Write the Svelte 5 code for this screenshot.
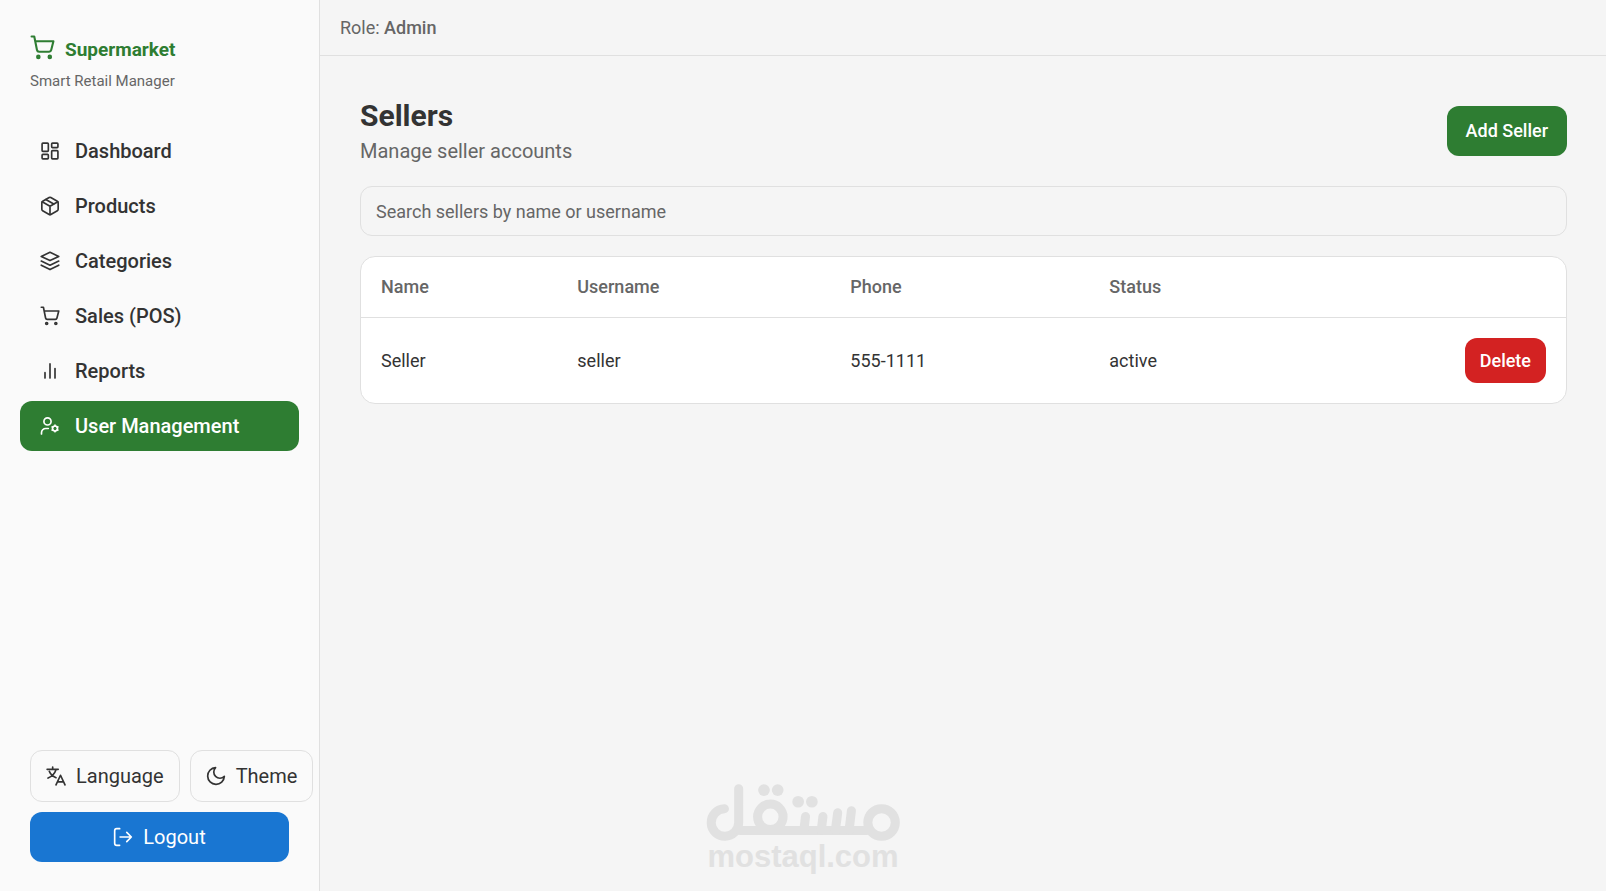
<script>
  let query = $state('');
  let active = $state('User Management');
  let sellers = $state([
    { name: 'Seller', username: 'seller', phone: '555-1111', status: 'active' }
  ]);

  const nav = ['Dashboard', 'Products', 'Categories', 'Sales (POS)', 'Reports', 'User Management'];

  const visible = $derived(
    sellers.filter((s) => (s.name + ' ' + s.username).toLowerCase().includes(query.toLowerCase()))
  );

  function remove(username) {
    sellers = sellers.filter((s) => s.username !== username);
  }
</script>

{#snippet icon(name)}
  <svg class="icon" class:brand-icon={name === 'Brand'} viewBox="0 0 24 24" aria-hidden="true">
    {#if name === 'Dashboard'}
      <rect x="2.5" y="2.5" width="7.5" height="10" rx="1" />
      <rect x="14" y="2.5" width="7.5" height="5.5" rx="1" />
      <rect x="14" y="11.5" width="7.5" height="10" rx="1" />
      <rect x="2.5" y="16" width="7.5" height="5.5" rx="1" />
    {:else if name === 'Products'}
      <path d="m7 4.2 9.5 5.4" />
      <path d="M21.8 8a2 2 0 0 0-1-1.73l-7.8-4.4a2 2 0 0 0-2 0L3.2 6.270A2 2 0 0 0 2.2 8v8a2 2 0 0 0 1 1.73l7.8 4.4a2 2 0 0 0 2 0l7.8-4.4a2 2 0 0 0 1-1.730Z" />
      <path d="m2.6 7 9.4 5.300L21.400 7M12 22.300V12.300" />
    {:else if name === 'Categories'}
      <path d="M12 1.5 22.5 6.5 12 11.5 1.5 6.5Z" />
      <path d="M1.5 12 12 17 22.500 12M1.500 17 12 22.300 22.500 17" />
    {:else if name === 'Sales (POS)' || name === 'Brand'}
      <circle cx="8" cy="21" r="1.2" />
      <circle cx="19" cy="21" r="1.2" />
      <path d="M1.5 1.500h2.6l2.6 12.900a2 2 0 0 0 2 1.6h9.700a2 2 0 0 0 1.950-1.570L22.500 6H5" />
    {:else if name === 'Reports'}
      <path d="M12 20.500V3.500M18 20.500V9M6 20.500v-6.500" />
    {:else if name === 'User Management'}
      <circle cx="9" cy="6.500" r="4.3" />
      <path d="M1.800 21.500v-1.500a5 5 0 0 1 5-5h3.200" />
      <circle cx="18" cy="15" r="3" />
      <path d="M18 11v1M18 18v1M21.500 13l-.8.500M15.300 16.500l-.8.500M21.500 17l-.8-.500M15.300 13.500l-.8-.500" />
    {:else if name === 'Language'}
      <path d="M1.300 4h13.400M8 1.300V4M12 4.500c-1.500 4.500-4.500 7.800-9.500 10M4 6.500c1.500 3.500 4 6 8 7.500M12 22.600l5.400-11.500 5.400 11.500M13.800 19h7.200" />
    {:else if name === 'Theme'}
      <path d="M11.500 2a7 7 0 0 0 10.500 10.500A10 10 0 1 1 11.500 2Z" />
    {:else if name === 'Logout'}
      <path d="M8 2H4.500a2.500 2.500 0 0 0-2.500 2.500v15a2.500 2.500 0 0 0 2.500 2.500H8M8.500 12h13.500M16.500 6.500 22 12l-5.500 5.500" />
    {/if}
  </svg>
{/snippet}

<div class="app">
  <aside class="sidebar">
    <div class="brand">
      <div class="brand-row">{@render icon('Brand')}<span class="brand-name">Supermarket</span></div>
      <div class="tagline">Smart Retail Manager</div>
    </div>
    <nav class="nav" aria-label="Main">
      {#each nav as item}
        <a class="nav-link" class:active={item === active} href="#{item}" onclick={() => (active = item)}>
          {@render icon(item)}<span>{item}</span>
        </a>
      {/each}
    </nav>
    <div class="tools">
      <div class="tool-row">
        <button class="outline">{@render icon('Language')}Language</button>
        <button class="outline">{@render icon('Theme')}Theme</button>
      </div>
      <button class="logout">{@render icon('Logout')}Logout</button>
    </div>
  </aside>

  <div class="content">
    <header class="topbar">Role: <strong>Admin</strong></header>
    <main class="main">
      <div class="page-head">
        <div>
          <h1>Sellers</h1>
          <p>Manage seller accounts</p>
        </div>
        <button class="add">Add Seller</button>
      </div>
      <input class="search" type="search" aria-label="Search sellers" placeholder="Search sellers by name or username" bind:value={query} />
      <div class="card">
        <table>
          <thead>
            <tr><th>Name</th><th>Username</th><th>Phone</th><th>Status</th><td></td></tr>
          </thead>
          <tbody>
            {#each visible as s (s.username)}
              <tr>
                <td>{s.name}</td>
                <td>{s.username}</td>
                <td>{s.phone}</td>
                <td>{s.status}</td>
                <td class="actions"><button class="delete" onclick={() => remove(s.username)}>Delete</button></td>
              </tr>
            {/each}
          </tbody>
        </table>
      </div>
    </main>
  </div>

  <div class="watermark">
    <svg viewBox="78 42 579 170" aria-hidden="true">
      <g fill="none" stroke="currentColor" stroke-width="27" stroke-linecap="round">
        <circle cx="602" cy="157" r="41" />
        <circle cx="270" cy="140" r="38" />
        <path d="M133 116A41 41 0 1 0 175.500 157V56" />
        <path d="M180 181H558" />
        <path d="M375 139 370 181M427 139 422 181M471 128 464 181M512 122 505 181" />
      </g>
      <g fill="currentColor">
        <circle cx="251" cy="60" r="17.500" />
        <circle cx="292" cy="60" r="17.500" />
        <circle cx="353" cy="95" r="17.500" />
        <circle cx="394" cy="95" r="17.500" />
      </g>
    </svg>
    <span>mostaql.com</span>
  </div>
</div>

<style>
  :global(body) {
    margin: 0;
    background: #f5f5f5;
  }
  .app {
    position: relative;
    display: flex;
    min-height: 100vh;
    box-sizing: border-box;
    font: 400 18px/20px Roboto, sans-serif;
    color: #333;
  }
  button,
  input {
    font: inherit;
    color: inherit;
    cursor: pointer;
    box-sizing: border-box;
  }
  .icon {
    width: 20px;
    height: 20px;
    flex: none;
    fill: none;
    stroke: currentColor;
    stroke-width: 2;
    stroke-linecap: round;
    stroke-linejoin: round;
  }
  .brand-icon {
    width: 25px;
    height: 25px;
  }
  .sidebar {
    display: flex;
    flex-direction: column;
    flex: none;
    width: 320px;
    box-sizing: border-box;
    padding: 35px 20px 29px;
    background: #fafafa;
    border-right: 1px solid #e0e0e0;
  }
  .brand {
    padding: 0 10px;
    color: #2e7d32;
  }
  .brand-row {
    display: flex;
    align-items: flex-start;
    gap: 10px;
  }
  .brand-name {
    font-size: 19px;
    line-height: 30px;
    font-weight: 700;
  }
  .tagline {
    margin-top: 4px;
    font-size: 15px;
    line-height: 24px;
    color: #666;
  }
  .nav {
    display: flex;
    flex-direction: column;
    gap: 5px;
    margin-top: 33px;
  }
  .nav-link {
    display: flex;
    align-items: center;
    gap: 15px;
    height: 50px;
    padding: 0 20px;
    border-radius: 12px;
    font-size: 20px;
    font-weight: 500;
    color: inherit;
    text-decoration: none;
  }
  .nav-link.active {
    background: #2e7d32;
    color: #fff;
  }
  .tools {
    display: flex;
    flex-direction: column;
    gap: 10px;
    margin-top: auto;
    padding: 0 10px;
    font-size: 20px;
    line-height: 30px;
  }
  .tool-row {
    display: flex;
    gap: 10px;
  }
  .tools button {
    display: flex;
    align-items: center;
    justify-content: center;
    gap: 10px;
    padding: 10px 15px;
    border-radius: 12px;
  }
  .outline {
    background: none;
    border: 1px solid #e0e0e0;
  }
  .logout {
    background: #1976d2;
    border: 0;
    color: #fff;
  }
  .content {
    flex: 1;
    min-width: 0;
  }
  .topbar {
    padding: 15px 20px;
    line-height: 25px;
    color: #666;
    border-bottom: 1px solid #e0e0e0;
  }
  .topbar strong {
    font-weight: 500;
  }
  .main {
    display: flex;
    flex-direction: column;
    gap: 20px;
    padding: 40px 39px 40px 40px;
  }
  .page-head {
    display: flex;
    align-items: center;
    justify-content: space-between;
  }
  h1 {
    margin: 0;
    font-size: 30px;
    line-height: 40px;
    font-weight: 700;
  }
  p {
    margin: 0;
    font-size: 20px;
    line-height: 30px;
    color: #666;
  }
  .add {
    height: 50px;
    padding: 0 19px;
    border: 0;
    border-radius: 12px;
    background: #2e7d32;
    color: #fff;
    font-weight: 500;
  }
  .search {
    width: 100%;
    height: 50px;
    padding: 0 15px;
    border: 1px solid #e0e0e0;
    border-radius: 12px;
    background: none;
    appearance: none;
    cursor: text;
  }
  .search::placeholder {
    color: #666;
    opacity: 1;
  }
  .card {
    overflow: hidden;
    background: #fff;
    border: 1px solid #e0e0e0;
    border-radius: 15px;
  }
  table {
    width: 100%;
    border-collapse: collapse;
    text-align: left;
  }
  th,
  td {
    padding: 20px;
  }
  th {
    font-weight: 500;
    color: #666;
  }
  thead tr {
    border-bottom: 1px solid #e0e0e0;
  }
  .actions {
    text-align: right;
  }
  .delete {
    display: inline-block;
    height: 45px;
    padding: 0 15px;
    border: 0;
    border-radius: 12px;
    background: #d32222;
    color: #fff;
    font-weight: 500;
    vertical-align: top;
  }
  .watermark {
    position: absolute;
    left: 50%;
    bottom: 18px;
    transform: translateX(-50%);
    display: flex;
    flex-direction: column;
    align-items: center;
    color: #e1e1e1;
    pointer-events: none;
  }
  .watermark svg {
    width: 194px;
  }
  .watermark span {
    font: 700 31px/32px 'Liberation Sans', sans-serif;
  }
</style>
